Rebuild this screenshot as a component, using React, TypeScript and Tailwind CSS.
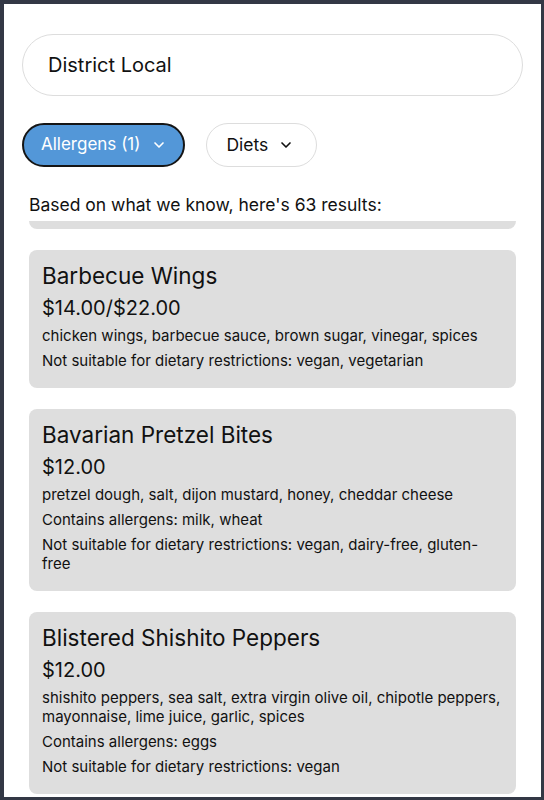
import React from 'react';
import { ChevronDown } from 'lucide-react';

// ========================================================================
// Data

interface MenuItem {
  name: string;
  price: string;
  ingredients: string;
  allergens?: string;
  restrictions?: string;
}

const ITEMS: MenuItem[] = [
  {
    name: 'Barbecue Wings',
    price: '$14.00/$22.00',
    ingredients: 'chicken wings, barbecue sauce, brown sugar, vinegar, spices',
    restrictions: 'vegan, vegetarian',
  },
  {
    name: 'Bavarian Pretzel Bites',
    price: '$12.00',
    ingredients: 'pretzel dough, salt, dijon mustard, honey, cheddar cheese',
    allergens: 'milk, wheat',
    restrictions: 'vegan, dairy-free, gluten-free',
  },
  {
    name: 'Blistered Shishito Peppers',
    price: '$12.00',
    ingredients:
      'shishito peppers, sea salt, extra virgin olive oil, chipotle peppers, mayonnaise, lime juice, garlic, spices',
    allergens: 'eggs',
    restrictions: 'vegan',
  },
];

// ========================================================================
// Components

const MenuCard: React.FC<{ item: MenuItem }> = ({ item }) => (
  <div className="bg-[#dedede] rounded-lg px-[13px] pt-[12px] pb-[18px] text-[#111]">
    <h3 className="text-[22.5px] leading-[28px] font-normal">{item.name}</h3>
    <div className="text-[20px] leading-[24px] mt-[6px]">{item.price}</div>
    <p className="text-[15px] leading-[19px] mt-[6px]">{item.ingredients}</p>
    {item.allergens && (
      <p className="text-[15px] leading-[19px] mt-[6px]">Contains allergens: {item.allergens}</p>
    )}
    {item.restrictions && (
      <p className="text-[15px] leading-[19px] mt-[6px]">
        Not suitable for dietary restrictions: {item.restrictions}
      </p>
    )}
  </div>
);

export default function App() {
  return (
    <div
      className="h-[800px] bg-[#333845] pt-1 pl-1 pr-[3px] pb-[3px]"
      style={{ fontFamily: 'Inter, "Noto Sans", sans-serif' }}
    >
      <div className="h-full bg-white overflow-hidden px-[18px] pt-[30px] flex flex-col">
        {/* Search */}
        <div className="h-[62px] rounded-full border border-[#dddddd] flex items-center px-[25px]">
          <span className="text-[20px] text-[#111]">District Local</span>
        </div>

        {/* Filters */}
        <div className="flex items-center gap-[21px] mt-[27px]">
          <button className="h-[44px] rounded-full border-2 border-[#151515] bg-[#5397d8] text-white flex items-center gap-[11px] pl-[17px] pr-[16px] text-[17px]">
            Allergens (1)
            <ChevronDown className="w-[16px] h-[16px]" strokeWidth={2.5} />
          </button>
          <button className="h-[44px] rounded-full border border-[#dddddd] bg-white text-[#111] flex items-center gap-[10px] pl-[19px] pr-[22px] text-[17.5px]">
            Diets
            <ChevronDown className="w-[16px] h-[16px]" strokeWidth={2.5} />
          </button>
        </div>

        <p className="px-[7px] mt-[27px] text-[17.5px] leading-[22px] text-[#111]">
          Based on what we know, here's 63 results:
        </p>

        {/* Results */}
        <div className="flex-1 overflow-hidden px-[7px] mt-[5px] flex flex-col gap-[21px]">
          <div className="h-[8px] shrink-0 bg-[#dedede] rounded-b-lg" />
          {ITEMS.map((item) => (
            <MenuCard key={item.name} item={item} />
          ))}
        </div>
      </div>
    </div>
  );
}
